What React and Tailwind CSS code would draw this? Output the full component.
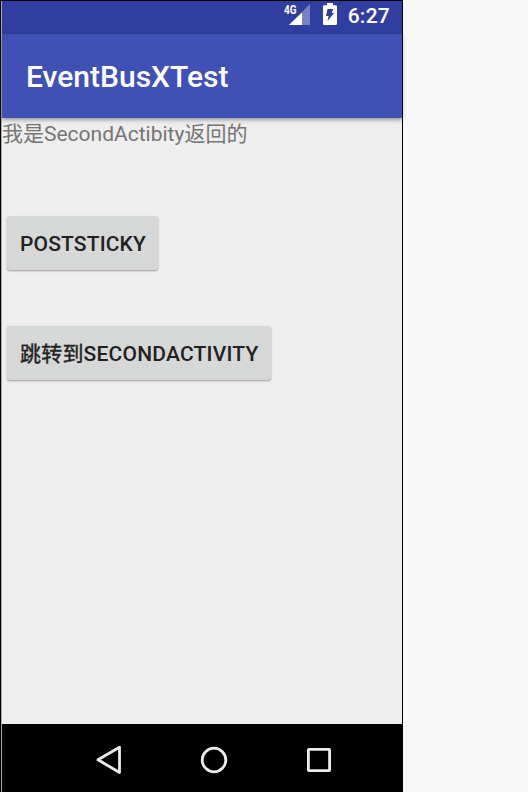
function StatusBar() {
  return (
    <div className="flex h-[33px] shrink-0 items-start justify-end bg-[#303f9f] pr-3 text-white">
      <svg width="28" height="24" viewBox="0 0 28 24" className="mt-0.5 mr-[11px]">
        <path d="M26 1V22H5Z" fill="#fff" fillOpacity="0.35" />
        <path d="M0 0H13.5V11.5H0Z" fill="#303f9f" />
        <path d="M18 9.5V22H5Z" fill="#fff" />
        <text x="0" y="10.6" fontSize="12.5" fontWeight="700" fill="#fff" textLength="12.5" lengthAdjust="spacingAndGlyphs" fontFamily="Roboto, sans-serif">4G</text>
      </svg>
      <svg width="14" height="22" viewBox="0 0 14 22" className="mt-0.5 mr-[11px]">
        <path fillRule="evenodd" fill="#fff" d="M4 0H10V2.3H12.7Q14 2.3 14 3.6V20.7Q14 22 12.7 22H1.3Q0 22 0 20.7V3.6Q0 2.3 1.3 2.3H4ZM4.5 6H10.2L8.8 10H11.2L4.5 18L5.6 13H3Z" />
      </svg>
      <span className="mt-[1px] text-[21px] leading-[28px] font-medium tracking-[0.25px]">6:27</span>
    </div>
  );
}

function RaisedButton({ children, className }) {
  return (
    <button className={`flex h-[54px] items-center rounded-[3px] bg-[#d6d7d7] pt-[4px] pl-[13px] text-[21px] font-medium whitespace-nowrap text-[#212121] shadow-[0_1px_2px_rgba(0,0,0,0.35)] ${className}`}>
      {children}
    </button>
  );
}

function NavigationBar() {
  return (
    <div className="flex h-[68px] shrink-0 items-center bg-black pt-1 pl-[93px]">
      <svg width="26" height="30" viewBox="0 0 26 30" fill="none" stroke="#ececec" strokeWidth="2.8" strokeLinejoin="round">
        <path d="M24.5 2.2V27.5L3 14.8Z" />
      </svg>
      <svg width="28" height="28" viewBox="0 0 28 28" fill="none" stroke="#ececec" strokeWidth="2.8" className="ml-[79px]">
        <circle cx="14" cy="14" r="11.8" />
      </svg>
      <svg width="26" height="26" viewBox="0 0 26 26" fill="none" stroke="#ececec" strokeWidth="2.8" strokeLinejoin="round" className="ml-[78px]">
        <rect x="2.4" y="2.4" width="21.2" height="21.2" rx="0.5" />
      </svg>
    </div>
  );
}

export default function App() {
  return (
    <div className="h-[792px] w-[528px] overflow-hidden bg-[#f8f8f8] font-[Roboto,'Noto_Sans_CJK_SC',sans-serif]">
      <div className="flex h-full w-[403px] border-x border-t border-black">
        <div className="w-px shrink-0 bg-[#aaa]" />
        <div className="flex w-[400px] flex-col">
          <StatusBar />
          <header className="z-10 flex h-[84px] shrink-0 items-center bg-[#3f51b5] pt-[2px] pl-6 shadow-[0_2px_4px_rgba(0,0,0,0.35)]">
            <h1 className="text-[30px] leading-[36px] font-medium text-white">EventBusXTest</h1>
          </header>
          <main className="flex flex-1 flex-col items-start bg-[#eeeeee]">
            <p className="h-[98px] pt-px text-[21px] leading-[31px] whitespace-nowrap text-[#757575]">我是SecondActibity返回的</p>
            <RaisedButton className="ml-[5px] w-[151px] tracking-[0.15px]">POSTSTICKY</RaisedButton>
            <RaisedButton className="mt-14 ml-[5px] w-[264px] tracking-[0.2px]">
              <span className="font-normal [-webkit-text-stroke:0.4px_#212121]">跳转到</span>SECONDACTIVITY
            </RaisedButton>
          </main>
          <NavigationBar />
        </div>
      </div>
    </div>
  );
}
